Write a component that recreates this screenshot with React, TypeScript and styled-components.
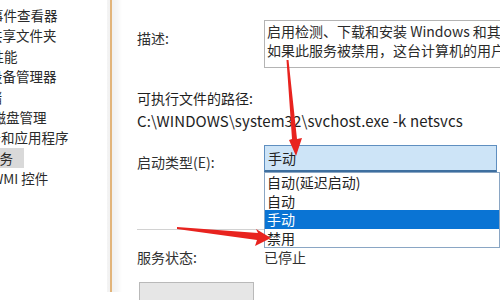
import React from 'react';
import styled, { createGlobalStyle } from 'styled-components';

const GlobalStyle = createGlobalStyle`
    html, body {
        margin: 0;
        padding: 0;
        background: #ffffff;
        overflow: hidden;
    }
    body {
        font-family: "Noto Sans CJK SC", "Noto Sans", sans-serif;
        color: #222;
    }
`;

/**
 * 전체 화면
 */
const Screen = styled.div`
    position: relative;
    width: 500px;
    height: 300px;
    display: flex;
    overflow: hidden;
    background: #fff;
`;

/* 왼쪽 트리 */
const Tree = styled.ul`
    width: 107px;
    flex: none;
    margin: 0;
    padding: 5px 0 0;
    list-style: none;
    overflow: hidden;
    font-size: 13.5px;
    color: #2a2a2a;
`;

const TreeRow = styled.li<{ $indent: number }>`
    height: 20.4px;
    line-height: 20.4px;
    white-space: nowrap;
    margin-left: ${(p) => p.$indent}px;
`;

const TreeLabel = styled.span<{ $selected?: boolean }>`
    display: inline-block;
    padding-right: ${(p) => (p.$selected ? 11 : 0)}px;
    background: ${(p) => (p.$selected ? '#d9d9d9' : 'transparent')};
`;

const Splitter = styled.div`
    width: 15px;
    height: 292px;
    flex: none;
    display: flex;
    background: linear-gradient(to right, #f4f4f4, #f0f0f0 30%, #f6f6f6 70%, #ffffff);
    &::before {
        content: '';
        width: 1.5px;
        margin-left: 3px;
        background: #e2b47a;
    }
`;

/* 오른쪽 속성 패널 */
const Panel = styled.div`
    flex: 1;
    min-width: 0;
    padding-left: 15px;
    font-size: 14px;
    color: #262626;
    white-space: nowrap;
`;

const Row = styled.div<{ $top: number }>`
    display: grid;
    grid-template-columns: 127px 1fr;
    align-items: start;
    margin-top: ${(p) => p.$top}px;
`;

const Label = styled.div<{ $pad?: number }>`
    line-height: 20px;
    padding-top: ${(p) => p.$pad || 0}px;
    color: #303030;
`;

const Line = styled.div<{ $top: number }>`
    line-height: 20px;
    margin-top: ${(p) => p.$top}px;
    color: #1e1e1e;
`;

const PathText = styled(Line)`
    font-size: 15px;
    letter-spacing: 0.1px;
`;

const DescBox = styled.div`
    width: 260px;
    height: 48px;
    box-sizing: border-box;
    border: 1px solid #b4b4b4;
    border-right: none;
    padding: 1px 0 0 2px;
    line-height: 19px;
    overflow: hidden;
    color: #2a2a2a;
`;

const SelectWrap = styled.div`
    position: relative;
    width: 233px;
`;

const Select = styled.div`
    height: 27px;
    box-sizing: border-box;
    border: 1px solid #5f8fc0;
    border-bottom: 2px solid #3e6f9f;
    background: #cde4f7;
    padding-left: 3px;
    line-height: 24px;
    color: #222;
`;

const Dropdown = styled.ul`
    position: absolute;
    left: 0;
    top: 27px;
    width: 236px;
    margin: 0;
    padding: 0;
    list-style: none;
    box-sizing: border-box;
    border: 1px solid #8aa6c4;
    background: #fff;
    z-index: 2;
`;

const Option = styled.li<{ $active?: boolean }>`
    height: 18.5px;
    line-height: 18.5px;
    padding-left: 2px;
    background: ${(p) => (p.$active ? '#0a74d4' : '#fff')};
    color: ${(p) => (p.$active ? '#fff' : '#222')};
`;

const Divider = styled.div`
    margin-top: 57px;
    height: 1px;
    background: #d2d2d2;
`;

const Button = styled.div`
    margin-top: 15px;
    margin-left: 2px;
    width: 115px;
    height: 24px;
    box-sizing: border-box;
    border: 1px solid #b9b9b9;
    background: #e6e6e6;
`;

const Overlay = styled.svg`
    position: absolute;
    left: 0;
    top: 0;
    pointer-events: none;
    z-index: 5;
`;

const treeItems = [
    { text: '事件查看器', indent: -10 },
    { text: '共享文件夹', indent: -11 },
    { text: '性能', indent: -9.5 },
    { text: '设备管理器', indent: -11 },
    { text: '存储', indent: -25 },
    { text: '磁盘管理', indent: -7.5 },
    { text: '服务和应用程序', indent: -26 },
    { text: '服务', indent: -14 },
    { text: 'WMI 控件', indent: -8.5 },
];

const options = ['自动(延迟启动)', '自动', '手动', '禁用'];

const App = () => {
    return (
        <Screen>
            <GlobalStyle />
            <Tree>
                {treeItems.map((item) => (
                    <TreeRow key={item.text} $indent={item.indent}>
                        <TreeLabel $selected={item.text === '服务'}>{item.text}</TreeLabel>
                    </TreeRow>
                ))}
            </Tree>
            <Splitter />
            <Panel>
                <Row $top={20}>
                    <Label $pad={8}>描述:</Label>
                    <DescBox>
                        启用检测、下载和安装 Windows 和其他程序的更新。
                        <br />
                        如果此服务被禁用，这台计算机的用户将无法使用
                    </DescBox>
                </Row>
                <Line $top={20}>可执行文件的路径:</Line>
                <PathText $top={3}>C:\WINDOWS\system32\svchost.exe -k netsvcs</PathText>
                <Row $top={14}>
                    <Label $pad={7}>启动类型(E):</Label>
                    <SelectWrap>
                        <Select>手动</Select>
                        <Dropdown>
                            {options.map((o) => (
                                <Option key={o} $active={o === '手动'}>
                                    {o}
                                </Option>
                            ))}
                        </Dropdown>
                    </SelectWrap>
                </Row>
                <Divider />
                <Row $top={17}>
                    <Label>服务状态:</Label>
                    <Label>已停止</Label>
                </Row>
                <Button />
            </Panel>
            <Overlay width="500" height="300" viewBox="0 0 500 300">
                <polygon
                    points="286.5,60 288.5,60 297,139 302,138 296,156 289,140 292,139"
                    fill="#e8231f"
                />
                <polygon
                    points="177,227 258,233 256,229 271,238 255,246 257,240 177,229"
                    fill="#e8231f"
                />
            </Overlay>
        </Screen>
    );
};

export default App;
